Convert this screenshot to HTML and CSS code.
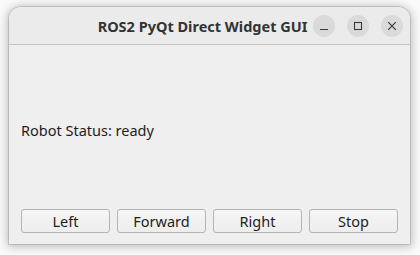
FILE: index.html
```html
<!DOCTYPE html>
<html lang="en">
<head>
  <meta charset="UTF-8" />
  <link rel="stylesheet" href="styles.css">
</head>
<body>

<div class="window">

  <!-- Title bar -->
  <div class="titlebar">
    <div class="title">ROS2 PyQt Direct Widget GUI</div>
    <div class="controls">
      <span class="ctl">
        <svg width="10" height="10" viewBox="0 0 10 10"><path d="M1 8.5h8" stroke="#3a3a3a" stroke-width="1.2"/></svg>
      </span>
      <span class="ctl">
        <svg width="10" height="10" viewBox="0 0 10 10"><rect x="1.5" y="1.5" width="7" height="7" fill="none" stroke="#3a3a3a" stroke-width="1.1"/></svg>
      </span>
      <span class="ctl">
        <svg width="10" height="10" viewBox="0 0 10 10"><path d="M1.2 1.2l7.6 7.6M8.8 1.2l-7.6 7.6" stroke="#3a3a3a" stroke-width="1.2"/></svg>
      </span>
    </div>
  </div>

  <!-- Widget area -->
  <div class="content">
    <div class="status">Robot Status: ready</div>
    <div class="buttons">
      <button class="btn">Left</button>
      <button class="btn">Forward</button>
      <button class="btn">Right</button>
      <button class="btn">Stop</button>
    </div>
  </div>

</div>

</body>
</html>
```

FILE: styles.css
```css
/* Page setup */
html, body {
  margin: 0;
  height: 100%;
}

body {
  background: #fafafa;
  padding: 7px 10px 11px 9px;
  box-sizing: border-box;
  font-family: 'Noto Sans', 'Open Sans', sans-serif;
  color: #1e1e1e;
}

/* Window frame */
.window {
  height: 100%;
  display: flex;
  flex-direction: column;
  background: #efefef;
  border-radius: 12px 12px 0 0;
  box-shadow: 0 1px 10px 2px rgba(0, 0, 0, 0.24), 0 0 0 1px rgba(0, 0, 0, 0.12);
  overflow: hidden;
}

.titlebar {
  position: relative;
  height: 37px;
  flex-shrink: 0;
  background: #ebebeb;
  border-bottom: 1px solid #c4c4c4;
  display: flex;
  align-items: center;
  justify-content: center;
}

.title {
  font-weight: bold;
  font-size: 14.5px;
  color: #333;
  margin-left: -14px;
}

.controls {
  position: absolute;
  right: 7px;
  top: 8px;
  display: flex;
  gap: 12px;
}

.ctl {
  width: 22px;
  height: 22px;
  border-radius: 50%;
  background: #dadada;
  display: flex;
  align-items: center;
  justify-content: center;
}

/* Content */
.content {
  flex: 1;
  display: flex;
  flex-direction: column;
  padding: 11px 12px 11px 12px;
}

.status {
  flex: 1;
  display: flex;
  align-items: center;
  font-size: 14.5px;
  margin-bottom: 6px;
}

.buttons {
  display: flex;
  gap: 7px;
}

.btn {
  flex: 1;
  height: 24px;
  padding: 0;
  font-family: inherit;
  font-size: 14.5px;
  color: #1e1e1e;
  background: linear-gradient(#f6f6f6, #ededed);
  border: 1px solid #b4b4b4;
  border-radius: 3px;
}
```
